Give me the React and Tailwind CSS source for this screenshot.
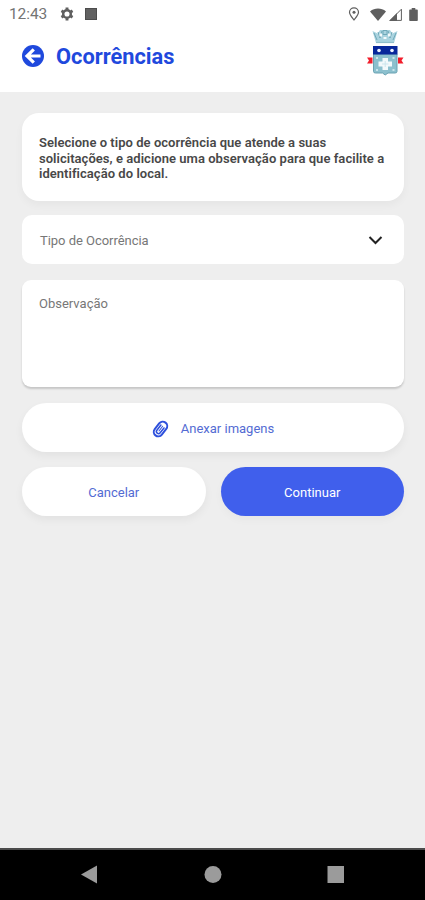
import { useState } from "react";

function BackIcon() {
  return (
    <svg width="22" height="22" viewBox="0 0 22 22" fill="none">
      <circle cx="11" cy="11" r="11" fill="#1f49dd" />
      <path d="M11.8 4.3L5 11l6.8 6.700M5.5 11h13" stroke="#fff" strokeWidth="3.2" />
    </svg>
  );
}

function ClipIcon() {
  return (
    <svg className="mr-3" width="17" height="18" viewBox="0 0 17 18" fill="none" stroke="#2e50dc">
      <g transform="rotate(38 8.5 9)" strokeLinecap="round">
        <rect x="4" y="0.9" width="9" height="16.2" rx="4.5" strokeWidth="2" />
        <path d="M10.6 6v6.200a2.100 2.100 0 0 1-4.200 0V5.600" strokeWidth="1.500" />
        <path d="M8.500 5.500v6" strokeWidth="1" />
      </g>
    </svg>
  );
}

function StatusBar() {
  return (
    <div className="h-7 flex items-center justify-between pl-[9px] pr-[7px] text-[#5f5f5f]">
      <div className="flex items-center">
        <span className="w-[51px] text-[15.5px] leading-7 text-[#747474] tracking-[-0.1px]">12:43</span>
        <svg width="14" height="14" viewBox="0 0 14 14" fill="none" stroke="currentColor">
          <circle cx="7" cy="7" r="3.8" strokeWidth="2.5" />
          <path
            d="M7 .6v2.2M7 11.2v2.2M1.45 3.8l1.9 1.1M10.65 9.1l1.9 1.1M1.45 10.2l1.9-1.1M10.65 4.9l1.9-1.1"
            strokeWidth="2.9"
          />
        </svg>
        <span className="ml-[11px] w-3 h-3 bg-[#616161] border border-[#4c4c4c]" />
      </div>
      <div className="flex items-center">
        <svg width="12" height="14" viewBox="0 0 12 14" fill="none" stroke="currentColor">
          <path d="M6 13C4 10.4 1.5 7.8 1.5 5.3a4.5 4.5 0 0 1 9 0C10.5 7.8 8 10.4 6 13z" strokeWidth="1.2" />
          <circle cx="6" cy="5.2" r="1.5" fill="currentColor" stroke="none" />
        </svg>
        <svg className="ml-[10px]" width="16" height="13" viewBox="0 0 16 13" fill="currentColor">
          <path d="M0 3.4C4.8-.4 11.2-.4 16 3.4L8 13z" />
        </svg>
        <svg className="ml-[3px]" width="13" height="13" viewBox="0 0 13 13" fill="currentColor">
          <path d="M12.4 1.2v11.2H1.2z" fill="none" stroke="currentColor" strokeWidth="1" />
          <path d="M8 5v8H0z" />
        </svg>
        <svg className="ml-[7px]" width="9" height="13" viewBox="0 0 9 13" fill="currentColor">
          <path d="M2.7 0h3.6v1.4h1.5c.6 0 1 .4 1 1V12c0 .6-.4 1-1 1H1.2c-.6 0-1-.4-1-1V2.4c0-.6.4-1 1-1h1.5z" />
        </svg>
      </div>
    </div>
  );
}

// City coat of arms: mural crown, blue band, cross and red ribbons
function Crest() {
  return (
    <svg width="38" height="48" viewBox="0 0 38 48">
      <path d="M6.5 3l5.2 2.4L14 2h10l2.3 3.4L31.5 3 28 15H10z" fill="#a9d3df" />
      <path d="M12 4l2 6 2-7M22 3l2 7 2-6M17 2.5h4v4h-4zM8 5l3 7M30 5l-3 7" fill="none" stroke="#6fa8b8" strokeWidth="1" />
      <path d="M13.5 5.5h2.5v3h-2.5zM22 5.5h2.5v3H22zM17.5 9h3v2h-3z" fill="#f4fafb" />
      <path d="M10 14.5h18" stroke="#8fbecb" strokeWidth="1.2" />
      <path d="M1 29.5h5.5v6H1l2-3zM37.5 29.5H32v6h5.500l-2-3z" fill="#f21d2b" />
      <path d="M7.5 26H31v17.5q0 1.500-2 1.500h-7l-2.800 2-2.700-2h-7q-2 0-2-1.500z" fill="#8cc0ce" stroke="#6ba3b3" />
      <path d="M7 18h24.500v8.500H7z" fill="#08279a" />
      <circle cx="13" cy="22.5" r="1.8" fill="#eef3ff" />
      <circle cx="26" cy="22.5" r="1.8" fill="#eef3ff" />
      <path d="M16.5 30H22v3.500h4v5h-4V42h-5.500v-3.500h-4v-5h4z" fill="#f2f9fb" />
      <path d="M19.2 33v6M16 36h6.5" stroke="#cbe5ec" strokeWidth="1" />
      <path d="M10 29h2v2h-2zM26.5 29h2v2h-2zM10 41h2v2h-2zM26.5 41h2v2h-2z" fill="#c9e5eb" />
    </svg>
  );
}

function Header() {
  return (
    <header className="h-16 flex items-start justify-between pl-[22px] pr-[21px] text-[#1f49dd]">
      <div className="flex items-center pt-[12px]">
        <button aria-label="Voltar" className="pb-[2px]">
          <BackIcon />
        </button>
        <h1 className="ml-3 pt-px text-[21.8px] leading-8 font-bold">Ocorrências</h1>
      </div>
      <Crest />
    </header>
  );
}

function NavBar() {
  return (
    <nav className="h-[52px] bg-black border-t-2 border-[#4b4b4b] text-[#9b9b9b]">
      <svg width="425" height="50" viewBox="0 0 425 50" fill="currentColor">
        <path d="M97 15.5v18l-16-9z" />
        <circle cx="213" cy="24.5" r="8.5" />
        <path d="M327.5 16H344v17h-16.500z" />
      </svg>
    </nav>
  );
}

export default function App() {
  const [observacao, setObservacao] = useState("");

  return (
    <div className="w-[425px] h-[900px] flex flex-col bg-[#eeeeee] font-['Roboto',sans-serif] overflow-hidden">
      <div className="h-[92px] bg-white shrink-0">
        <StatusBar />
        <Header />
      </div>

      <main className="flex-1 flex flex-col pr-[21px] pl-[22px] pt-[21px]">
        <div className="h-[88px] rounded-[17px] bg-white pl-[17px] pt-[22px] shadow-[0_4px_8px_rgba(0,0,0,0.04)]">
          <p className="text-[13px] leading-[15.5px] tracking-[0.04px] font-semibold text-[#484848] whitespace-nowrap">
            Selecione o tipo de ocorrência que atende a suas
            <br />
            solicitações, e adicione uma observação para que facilite a
            <br />
            identificação do local.
          </p>
        </div>

        <button className="mt-[14px] h-[49px] rounded-[10px] bg-white pl-[18px] pr-[21px] pt-px flex items-center justify-between">
          <span className="pt-px text-[13px] tracking-[-0.04px] text-[#777]">Tipo de Ocorrência</span>
          <svg width="15" height="9" viewBox="0 0 15 9" fill="none" stroke="#222" strokeWidth="2">
            <path d="M1.5 1l6 6 6-6" />
          </svg>
        </button>

        <textarea
          value={observacao}
          onChange={(e) => setObservacao(e.target.value)}
          placeholder="Observação"
          className="mt-4 h-[107px] shrink-0 resize-none outline-none rounded-[9px] bg-white pl-[17px] pt-[14px] text-[13px] leading-5 placeholder:text-[#777] shadow-[0_2px_2px_rgba(0,0,0,0.17)]"
        />

        <button className="mt-4 h-[49px] rounded-full bg-white pt-[2px] flex items-center justify-center text-[13px] text-[#536bd3] shadow-[0_4px_8px_rgba(0,0,0,0.05)]">
          <ClipIcon />
          Anexar imagens
        </button>

        <div className="mt-[15px] flex gap-[15px] text-[13px]">
          <button className="h-[49px] flex-1 rounded-full bg-white pt-[2px] text-[#536bd3] shadow-[0_4px_8px_rgba(0,0,0,0.05)]">
            Cancelar
          </button>
          <button className="h-[49px] flex-1 rounded-full bg-[#405fec] pt-[2px] text-white shadow-[0_4px_8px_rgba(0,0,0,0.03)]">
            Continuar
          </button>
        </div>
      </main>

      <NavBar />
    </div>
  );
}
